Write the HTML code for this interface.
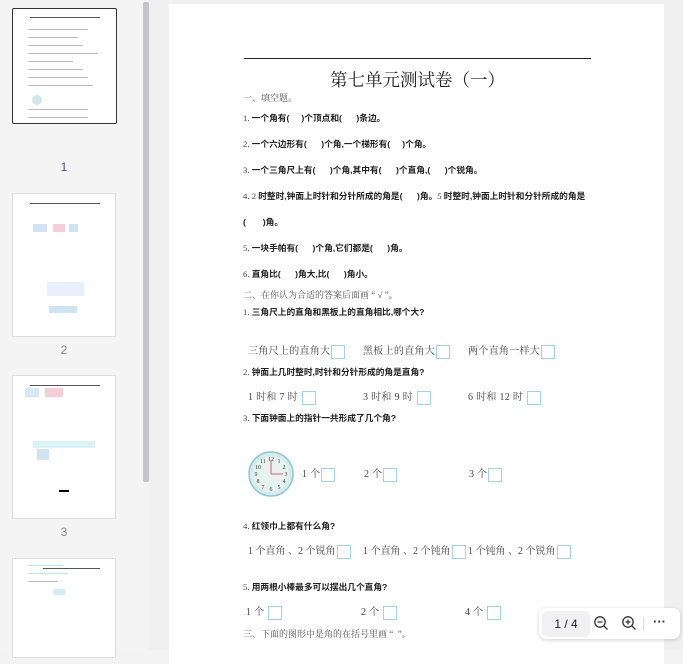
<!DOCTYPE html>
<html><head><meta charset="utf-8"><style>
*{margin:0;padding:0;box-sizing:border-box}
body{width:683px;height:650px;overflow:hidden;background:#f3f3f3;font-family:"Liberation Sans","Noto Sans CJK SC",sans-serif;position:relative}
.a{position:absolute;white-space:nowrap}
.side{position:absolute;left:0;top:0;width:143px;height:650px;background:#f4f4f4}
.sb{position:absolute;left:143px;top:2px;width:6px;height:480px;background:#c4c4cc;border-radius:2px}
.main{position:absolute;left:149px;top:0;width:534px;height:650px;background:#f0f0f0}
.page{position:absolute;left:169px;top:4px;width:495px;height:660px;background:#fff}
.th{position:absolute;background:#fff;border:1px solid #ddd}
.lbl{position:absolute;width:104px;text-align:center;font-size:12px;color:#888;left:12px}
.q{position:absolute;left:243px;font-size:8.7px;color:#222;white-space:nowrap;font-weight:bold}
.q .n{font-weight:normal;font-family:"Liberation Serif",serif;color:#444}
.s{position:absolute;font-size:9px;color:#555;font-family:"Liberation Serif","Noto Serif CJK SC",serif;white-space:nowrap}
.o{position:absolute;font-size:10px;color:#444;font-family:"Liberation Serif","Noto Serif CJK SC",serif;white-space:nowrap;letter-spacing:0.3px}
.b{display:inline-block;width:14px;height:14px;border:1.5px solid #9fd3ea;vertical-align:middle;margin-left:1px}
.tl{position:absolute;height:1px;background:#bbb}
</style></head><body>
<div class="side"></div>
<div class="sb"></div>
<div class="main"></div>
<div class="th" style="left:12px;top:8px;width:105px;height:116px;border:1.5px solid #333;border-radius:2px">
 <div class="tl" style="left:17px;top:8px;width:70px;background:#555"></div>
 <div class="tl" style="left:15px;top:20px;width:60px"></div><div class="tl" style="left:15px;top:28px;width:50px"></div>
 <div class="tl" style="left:15px;top:36px;width:55px"></div><div class="tl" style="left:15px;top:44px;width:70px"></div>
 <div class="tl" style="left:15px;top:52px;width:45px"></div><div class="tl" style="left:15px;top:60px;width:55px"></div>
 <div class="tl" style="left:15px;top:68px;width:60px"></div><div class="tl" style="left:15px;top:76px;width:65px"></div>
 <div style="position:absolute;left:19px;top:86px;width:10px;height:10px;border-radius:50%;background:#cfe7e6"></div>
 <div class="tl" style="left:15px;top:100px;width:60px"></div><div class="tl" style="left:15px;top:108px;width:60px"></div>
</div>
<div class="lbl" style="top:160px;color:#4a4ab0">1</div>
<div class="th" style="left:12px;top:193px;width:104px;height:144px">
 <div class="tl" style="left:17px;top:9px;width:70px;background:#555"></div>
 <div style="position:absolute;left:20px;top:30px;width:14px;height:8px;background:#cfe3f5"></div>
 <div style="position:absolute;left:40px;top:30px;width:12px;height:8px;background:#f7cdd7"></div>
 <div style="position:absolute;left:56px;top:30px;width:9px;height:8px;background:#cfe3f5"></div>
 <div style="position:absolute;left:34px;top:88px;width:37px;height:14px;background:#e8f1fb"></div>
 <div style="position:absolute;left:36px;top:112px;width:28px;height:7px;background:#cfe3f5"></div>
</div>
<div class="lbl" style="top:343px">2</div>
<div class="th" style="left:12px;top:375px;width:104px;height:144px">
 <div class="tl" style="left:17px;top:9px;width:70px;background:#555"></div>
 <div style="position:absolute;left:12px;top:12px;width:14px;height:9px;background:#d7e8f7"></div>
 <div style="position:absolute;left:32px;top:12px;width:18px;height:9px;background:#f7cdd7"></div>
 <div style="position:absolute;left:20px;top:65px;width:62px;height:7px;background:#d9f3f7"></div>
 <div style="position:absolute;left:24px;top:73px;width:12px;height:11px;background:#cfe3f5"></div>
 <div style="position:absolute;left:46px;top:114px;width:10px;height:2px;background:#000"></div>
</div>
<div class="lbl" style="top:525px">3</div>
<div class="th" style="left:12px;top:558px;width:104px;height:100px">
 <div class="tl" style="left:30px;top:9px;width:57px;background:#555"></div>
 <div class="tl" style="left:15px;top:6px;width:35px;background:#bfe1f2"></div>
 <div class="tl" style="left:15px;top:14px;width:40px;background:#bfe1f2"></div>
 <div class="tl" style="left:15px;top:22px;width:30px"></div>
 <div style="position:absolute;left:40px;top:30px;width:12px;height:6px;background:#d7e8f7"></div>
</div>
<div class="page"></div>
<div class="a" style="left:244px;top:58px;width:347px;height:1px;background:#222"></div>
<div class="a" style="left:330px;top:67px;font-size:17.5px;font-family:'Liberation Serif','Noto Serif CJK SC',serif;color:#222">第七单元测试卷（一）</div>
<div class="s" style="left:243px;top:91px">一、填空题。</div>
<div class="q" style="top:111px"><span class="n">1. </span>一个角有(&nbsp;&nbsp;&nbsp;&nbsp;&nbsp;)个顶点和(&nbsp;&nbsp;&nbsp;&nbsp;&nbsp;&nbsp;)条边。</div>
<div class="q" style="top:137px"><span class="n">2. </span>一个六边形有(&nbsp;&nbsp;&nbsp;&nbsp;&nbsp;&nbsp;)个角,一个梯形有(&nbsp;&nbsp;&nbsp;&nbsp;&nbsp;)个角。</div>
<div class="q" style="top:163px"><span class="n">3. </span>一个三角尺上有(&nbsp;&nbsp;&nbsp;&nbsp;&nbsp;&nbsp;)个角,其中有(&nbsp;&nbsp;&nbsp;&nbsp;&nbsp;&nbsp;)个直角,(&nbsp;&nbsp;&nbsp;&nbsp;&nbsp;&nbsp;)个锐角。</div>
<div class="q" style="top:189px"><span class="n">4. 2 </span>时整时,钟面上时针和分针所成的角是(&nbsp;&nbsp;&nbsp;&nbsp;&nbsp;&nbsp;)角。<span class="n">5 </span>时整时,钟面上时针和分针所成的角是</div>
<div class="q" style="top:215px">(&nbsp;&nbsp;&nbsp;&nbsp;&nbsp;&nbsp;&nbsp;)角。</div>
<div class="q" style="top:241px"><span class="n">5. </span>一块手帕有(&nbsp;&nbsp;&nbsp;&nbsp;&nbsp;&nbsp;)个角,它们都是(&nbsp;&nbsp;&nbsp;&nbsp;&nbsp;&nbsp;)角。</div>
<div class="q" style="top:267px"><span class="n">6. </span>直角比(&nbsp;&nbsp;&nbsp;&nbsp;&nbsp;&nbsp;)角大,比(&nbsp;&nbsp;&nbsp;&nbsp;&nbsp;&nbsp;)角小。</div>
<div class="s" style="left:243px;top:288px">二、在你认为合适的答案后面画 “ √ ”。</div>
<div class="q" style="top:305px"><span class="n">1. </span>三角尺上的直角和黑板上的直角相比,哪个大?</div>
<div class="o" style="left:248px;top:342px">三角尺上的直角大<span class="b"></span></div>
<div class="o" style="left:363px;top:342px">黑板上的直角大<span class="b"></span></div>
<div class="o" style="left:468px;top:342px">两个直角一样大<span class="b"></span></div>
<div class="q" style="top:365px"><span class="n">2. </span>钟面上几时整时,时针和分针形成的角是直角?</div>
<div class="o" style="left:248px;top:388px">1 时和 7 时 <span class="b"></span></div>
<div class="o" style="left:363px;top:388px">3 时和 9 时 <span class="b"></span></div>
<div class="o" style="left:468px;top:388px">6 时和 12 时 <span class="b"></span></div>
<div class="q" style="top:411px"><span class="n">3. </span>下面钟面上的指针一共形成了几个角?</div>
<svg class="a" style="left:248px;top:451px" width="46" height="46" viewBox="0 0 46 46">
<circle cx="23" cy="23" r="22" fill="#d7ece9" stroke="#8cc7e0" stroke-width="1.5"/>
<circle cx="23" cy="23" r="18" fill="#e6f3ef"/>
<g font-size="6" font-family="Liberation Serif" fill="#333" text-anchor="middle">
<text x="23" y="10">12</text><text x="31" y="12">1</text><text x="36" y="18">2</text><text x="38" y="25">3</text><text x="36" y="32">4</text><text x="31" y="38">5</text><text x="23" y="40">6</text><text x="15" y="38">7</text><text x="10" y="32">8</text><text x="8" y="25">9</text><text x="10" y="18">10</text><text x="15" y="12">11</text></g>
<path d="M23 23V9M23 23H35" stroke="#e87896" stroke-width="1.3" fill="none"/></svg>
<div class="o" style="left:302px;top:465px">1 个<span class="b"></span></div>
<div class="o" style="left:364px;top:465px">2 个<span class="b"></span></div>
<div class="o" style="left:469px;top:465px">3 个<span class="b"></span></div>
<div class="q" style="top:519px"><span class="n">4. </span>红领巾上都有什么角?</div>
<div class="o" style="left:248px;top:542px;letter-spacing:0">1 个直角 、2 个锐角<span class="b"></span></div>
<div class="o" style="left:363px;top:542px;letter-spacing:0">1 个直角 、2 个钝角<span class="b"></span></div>
<div class="o" style="left:468px;top:542px;letter-spacing:0">1 个钝角 、2 个锐角<span class="b"></span></div>
<div class="q" style="top:580px"><span class="n">5. </span>用两根小棒最多可以摆出几个直角?</div>
<div class="o" style="left:246px;top:603px">1 个 <span class="b"></span></div>
<div class="o" style="left:361px;top:603px">2 个 <span class="b"></span></div>
<div class="o" style="left:465px;top:603px">4 个 <span class="b"></span></div>
<div class="s" style="left:243px;top:627px">三、下面的图形中是角的在括号里画 “&nbsp;&nbsp;”。</div>
<div class="a" style="left:539px;top:608px;width:141px;height:31px;background:#fff;border-radius:7px;box-shadow:0 1px 4px rgba(0,0,0,.18)"></div>
<div class="a" style="left:542px;top:611px;width:48px;height:26px;background:#f1f1f3;border-radius:5px;font-size:12px;color:#222;text-align:center;line-height:26px">1 / 4</div>
<svg class="a" style="left:593px;top:615px" width="16" height="16" viewBox="0 0 16 16"><circle cx="7" cy="7" r="5.2" fill="none" stroke="#333" stroke-width="1.3"/><path d="M4.5 7h5M11 11l3.5 3.5" stroke="#333" stroke-width="1.3"/></svg>
<svg class="a" style="left:621px;top:615px" width="16" height="16" viewBox="0 0 16 16"><circle cx="7" cy="7" r="5.2" fill="none" stroke="#333" stroke-width="1.3"/><path d="M4.5 7h5M7 4.5v5M11 11l3.5 3.5" stroke="#333" stroke-width="1.3"/></svg>
<div class="a" style="left:643px;top:617px;width:1px;height:13px;background:#ddd"></div>
<div class="a" style="left:653px;top:614px;font-size:13px;color:#333;font-weight:bold">···</div>
</body></html>
